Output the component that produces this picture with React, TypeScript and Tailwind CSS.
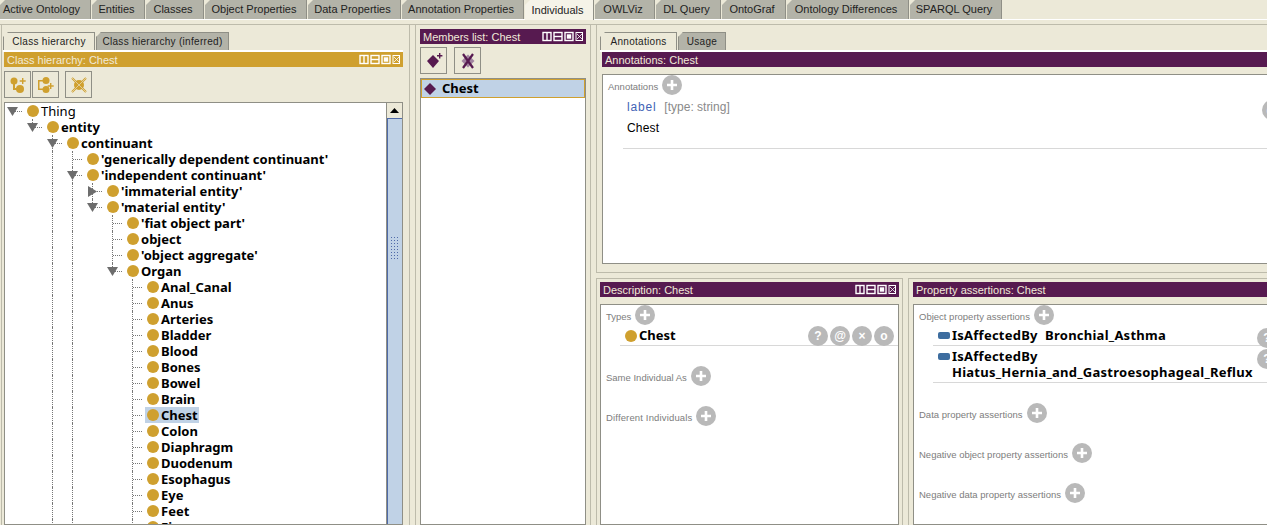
import React from 'react';

const topTabs = [
    { label: 'Active Ontology', width: 91 },
    { label: 'Entities', width: 53 },
    { label: 'Classes', width: 58 },
    { label: 'Object Properties', width: 102 },
    { label: 'Data Properties', width: 93 },
    { label: 'Annotation Properties', width: 122 },
    { label: 'Individuals', width: 69, active: true },
    { label: 'OWLViz', width: 60 },
    { label: 'DL Query', width: 65 },
    { label: 'OntoGraf', width: 64 },
    { label: 'Ontology Differences', width: 122 },
    { label: 'SPARQL Query', width: 92 },
];

// level: indent, toggle: open/closed/none, guides: indents that carry a vertical dotted line
type Row = { label: string; level: number; toggle?: 'open' | 'closed'; last?: boolean; guides: number[]; plain?: boolean; selected?: boolean };

const organs = ['Anal_Canal', 'Anus', 'Arteries', 'Bladder', 'Blood', 'Bones', 'Bowel', 'Brain', 'Chest', 'Colon', 'Diaphragm', 'Duodenum', 'Esophagus', 'Eye', 'Feet', 'Fi'];

const rows: Row[] = [
    { label: 'Thing', level: 0, toggle: 'open', last: true, guides: [], plain: true },
    { label: 'entity', level: 1, toggle: 'open', last: true, guides: [] },
    { label: 'continuant', level: 2, toggle: 'open', guides: [] },
    { label: "'generically dependent continuant'", level: 3, guides: [2] },
    { label: "'independent continuant'", level: 3, toggle: 'open', guides: [2] },
    { label: "'immaterial entity'", level: 4, toggle: 'closed', guides: [2, 3] },
    { label: "'material entity'", level: 4, toggle: 'open', last: true, guides: [2, 3] },
    { label: "'fiat object part'", level: 5, guides: [2, 3] },
    { label: 'object', level: 5, guides: [2, 3] },
    { label: "'object aggregate'", level: 5, guides: [2, 3] },
    { label: 'Organ', level: 5, toggle: 'open', last: true, guides: [2, 3] },
    ...organs.map(o => ({ label: o, level: 6, guides: [2, 3], selected: o === 'Chest' })),
];

const ClassDot = ({ className = '' }: { className?: string }) => (
    <span className={`inline-block w-3 h-3 rounded-full bg-[#cfa02f] shrink-0 ${className}`} />
);

const ViewButtons = () => (
    <svg width="41" height="11" viewBox="0 0 41 11" className="shrink-0">
        <g fill="none" stroke="#fff" strokeWidth="1.4">
            <rect x="1" y="1.5" width="8" height="8" />
            <path d="M5 1.5v8" />
            <rect x="12" y="1.5" width="8" height="8" />
            <path d="M12 5.5h8" />
            <rect x="23" y="1.5" width="8" height="8" />
            <rect x="25.5" y="4" width="3" height="3" fill="#fff" />
            <rect x="34" y="1.5" width="6.5" height="8" strokeWidth="1" />
            <path d="M35 3l5 5M40 3l-5 5" strokeWidth="0.8" />
        </g>
    </svg>
);

const TitleBar = ({ title, color, buttons = true }: { title: string; color: string; buttons?: boolean }) => (
    <div className={`h-[15px] flex items-center justify-between pl-[3px] pr-[3px] shrink-0 text-[11px] text-[#f1ead8] ${color}`}>
        <span className="mt-[2px]">{title}</span>
        {buttons && <ViewButtons />}
    </div>
);

const SubTab = ({ label, width, active }: { label: string; width: number; active?: boolean }) => (
    <div
        className={`h-[18px] flex items-center justify-center text-[10px] tracking-[0.3px] text-[#222] border border-b-0 border-[#8f8f86] [clip-path:polygon(5px_0,100%_0,100%_100%,0_100%,0_5px)] ${active ? 'bg-[#ece9d8]' : 'bg-[#b3b3a8]'}`}
        style={{ width }}
    >
        {label}
    </div>
);

const ToolButton = ({ children, className = '' }: { children: React.ReactNode; className?: string }) => (
    <div className={`w-[27px] h-[27px] border border-[#8f8f86] flex items-center justify-center ${className}`}>{children}</div>
);

const PlusButton = () => (
    <span className="w-5 h-5 rounded-full bg-[#b9b9b9] inline-flex items-center justify-center shrink-0">
        <svg width="12" height="12" viewBox="0 0 12 12"><path d="M6 1v10M1 6h10" stroke="#fff" strokeWidth="2.6" /></svg>
    </span>
);

const RoundButton = ({ children }: { children: React.ReactNode }) => (
    <span className="w-5 h-5 rounded-full bg-[#b9b9b9] inline-flex items-center justify-center shrink-0 text-white text-[12px] font-bold leading-none">{children}</span>
);

const SectionLabel = ({ label, className = '' }: { label: string; className?: string }) => (
    <div className={`flex items-center text-[9.5px] text-[#7d7d7d] ${className}`}>
        <span className="mr-[4px] mt-[5px]">{label}</span>
        <PlusButton />
    </div>
);

const Triangle = ({ toggle }: { toggle: 'open' | 'closed' }) => (
    <svg width="11" height="11" viewBox="0 0 11 11" className="relative shrink-0">
        {toggle === 'open' ? <path d="M0 1h11L5.5 10z" fill="#6d6d6d" /> : <path d="M1 0v11l9-5.5z" fill="#6d6d6d" />}
    </svg>
);

const TreeRow = ({ row }: { row: Row }) => (
    <div className="flex h-4 items-center -ml-[3px] shrink-0">
        {Array.from({ length: row.level }).map((_, i) => (
            <div key={i} className="w-5 h-4 shrink-0">
                {row.guides.includes(i) && <div className="h-4 w-[11px] border-r border-dotted border-[#777]" />}
            </div>
        ))}
        <div className="w-[20px] h-4 shrink-0 flex items-center justify-center relative">
            <div className="absolute left-[11px] right-0 top-[8px] border-t border-dotted border-[#777]" />
            {row.level > 0 && (
                <div className={`absolute left-[10px] top-0 border-l border-dotted border-[#777] ${row.last ? 'h-2' : 'h-4'}`} />
            )}
            {row.toggle && <Triangle toggle={row.toggle} />}
        </div>
        <div className={`flex items-center h-4 ${row.selected ? 'bg-[#c0d2e6] ml-[3px]' : ''}`}>
            <ClassDot className={row.selected ? 'ml-[2px]' : 'ml-[5px]'} />
            <span className={`ml-[2px] pr-[1px] text-[13px] leading-4 text-black whitespace-nowrap ${row.plain ? '' : 'font-bold'}`}>{row.label}</span>
        </div>
    </div>
);

const Scrollbar = () => (
    <div className="w-[16px] shrink-0 border-l border-[#8f8f86] flex flex-col">
        <div className="h-4 bg-[#ece9d8] border-b border-[#4f6aa8] flex items-center justify-center">
            <svg width="9" height="5" viewBox="0 0 9 5"><path d="M0 5h9L4.5 0z" fill="#000" /></svg>
        </div>
        <div className="flex-1 bg-[#c0d2e6] border-l border-[#4f6aa8] flex flex-col items-center pt-[117px]">
            <div className="w-[10px] h-[24px] bg-[radial-gradient(#4f6aa8_1px,transparent_1px)] bg-[length:3px_3px]" />
        </div>
    </div>
);

const AssertionRow = ({ lines }: { lines: string[] }) => (
    <div className="ml-[14px] border-b border-[#d8d8d8] pl-[5px] py-[2px] flex relative">
        <span className="w-[12px] h-[7px] rounded-[2px] bg-[#3d6d9f] mt-[5px] mr-[2px] shrink-0" />
        <div className="font-bold text-[13px] tracking-[0.25px] leading-[16px] text-black whitespace-pre overflow-hidden w-[302px] [font-family:'Noto_Sans',sans-serif]">
            {lines.map(l => <div key={l}>{l}</div>)}
        </div>
        <span className="absolute left-[324px] top-0"><RoundButton>?</RoundButton></span>
    </div>
);

export default function App() {
    return (
        <div className="w-[1267px] h-[525px] overflow-hidden bg-[#ece9d8] flex flex-col [font-family:'Liberation_Sans',sans-serif]">
            {/* Main tab strip */}
            <div className="h-[19px] flex gap-[1px] shrink-0 relative">
                {topTabs.map((t, i) => (
                    <div
                        key={t.label}
                        className={`relative shrink-0 flex items-center justify-center text-[11px] text-[#222] border-r border-[#8f8f86] [clip-path:polygon(5px_0,100%_0,100%_100%,0_100%,0_5px)] ${i === 0 ? 'pr-[7px]' : 'pr-[3px]'} ${t.active ? 'bg-[#f5f3e8] h-[20px] z-10' : 'bg-[#b3b3a8] h-[19px]'}`}
                        style={{ width: t.width }}
                    >
                        {t.label}
                    </div>
                ))}
            </div>
            <div className="h-px bg-white shrink-0" />
            <div className="h-px mt-[4px] bg-[#bdbbab] shrink-0" />

            <div className="flex-1 flex min-h-0 pl-[1px]">
                {/* Class hierarchy */}
                <div className="w-[409px] shrink-0 border-l border-r border-[#bdbbab] flex flex-col pt-[7px] pl-[1px] pr-[6px]">
                    <div className="flex gap-[1px] shrink-0">
                        <SubTab label="Class hierarchy" width={92} active />
                        <SubTab label="Class hierarchy (inferred)" width={133} />
                    </div>
                    <div className="h-[2px] bg-white shrink-0" />
                    <div className="pl-[1px] flex flex-col flex-1 min-h-0">
                        <TitleBar title="Class hierarchy: Chest" color="bg-[#cfa02f]" />
                        <div className="flex mt-[4px] mb-[4px] shrink-0">
                            <ToolButton>
                                <svg width="18" height="18" viewBox="0 0 18 18"><g fill="#cfa02f"><circle cx="5" cy="5" r="3.5" /><circle cx="11" cy="13" r="4" /><path d="M4 8h2v4h3v2H4zM13 2h1.4v2.3h2.3v1.4h-2.3V8H13V5.7h-2.3V4.3H13z" /></g></svg>
                            </ToolButton>
                            <ToolButton className="ml-[1px]">
                                <svg width="18" height="18" viewBox="0 0 18 18"><g fill="#cfa02f"><circle cx="9" cy="4.5" r="3.5" /><circle cx="9" cy="13.5" r="3.5" /><path d="M1 4h5v1.5H2.5v7H6V14H1zM13 7h1.4v2.3h2.3v1.4h-2.3V13H13v-2.3h-2.3V9.3H13z" /></g></svg>
                            </ToolButton>
                            <ToolButton className="ml-[6px]">
                                <svg width="18" height="18" viewBox="0 0 18 18"><circle cx="9" cy="9" r="5" fill="#cfa02f" /><path d="M2 2l14 14M16 2L2 16" stroke="#cfa02f" strokeWidth="2" /><path d="M2 2l14 14M16 2L2 16" stroke="#ece9d8" strokeWidth="0.6" /></svg>
                            </ToolButton>
                        </div>
                        <div className="flex-1 min-h-0 border border-[#8f8f86] flex bg-white">
                            <div className="flex-1 flex flex-col overflow-hidden [font-family:'Noto_Sans',sans-serif]">
                                {rows.map(r => <TreeRow key={r.label} row={r} />)}
                            </div>
                            <Scrollbar />
                        </div>
                    </div>
                </div>

                {/* Members list */}
                <div className="w-[176px] ml-[5px] shrink-0 border-l border-r border-[#bdbbab] flex flex-col pt-[4px] pl-[4px] pr-[4px]">
                    <TitleBar title="Members list: Chest" color="bg-[#571a50]" />
                    <div className="flex gap-[7px] mt-[3px] mb-[4px] shrink-0">
                        <ToolButton>
                            <svg width="18" height="18" viewBox="0 0 18 18"><path d="M8 3l6 6-6 7-6-7z" fill="#571a50" /><path d="M14 1h1.4v2h2v1.4h-2v2H14v-2h-2V3h2z" fill="#571a50" /></svg>
                        </ToolButton>
                        <ToolButton>
                            <svg width="18" height="18" viewBox="0 0 18 18"><path d="M9 2.5l6.5 6.5-6.5 6.5L2.5 9z" fill="#a283a0" /><path d="M4 2l10 14M14 2L4 16" stroke="#571a50" strokeWidth="2.2" /></svg>
                        </ToolButton>
                    </div>
                    <div className="flex-1 border border-[#8f8f86] bg-white">
                        <div className="h-[19px] bg-[#c0d2e6] border border-[#cfa02f] flex items-center pl-[2px]">
                            <svg width="12" height="12" viewBox="0 0 12 12"><path d="M6 0l6 6-6 6-6-6z" fill="#571a50" /></svg>
                            <span className="ml-[6px] text-[13px] font-bold text-black [font-family:'Noto_Sans',sans-serif]">Chest</span>
                        </div>
                    </div>
                </div>

                {/* Individual details */}
                <div className="flex-1 min-w-0 ml-[5px] flex flex-col">
                    <div className="h-[248px] shrink-0 border-l border-b border-[#bdbbab] flex flex-col pt-[7px] pl-[3px]">
                        <div className="flex gap-[1px] shrink-0">
                            <SubTab label="Annotations" width={77} active />
                            <SubTab label="Usage" width={48} />
                        </div>
                        <div className="h-[2px] bg-white shrink-0" />
                        <div className="pl-[2px] flex flex-col flex-1 min-h-0 pb-[8px]">
                            <TitleBar title="Annotations: Chest" color="bg-[#571a50]" buttons={false} />
                            <div className="flex-1 mt-[7px] border border-[#8f8f86] border-r-0 bg-white relative pl-[5px]">
                                <SectionLabel label="Annotations" />
                                <div className="pl-[19px] mt-[4px] text-[12px] leading-4 text-[#8a8a8a] flex">
                                    <span className="text-[#3f63b5] tracking-[0.8px]">label</span>
                                    <span className="ml-[8px]">[type: string]</span>
                                </div>
                                <div className="pl-[19px] mt-[5px] text-[12px] tracking-[0.2px] leading-4 text-black">Chest</div>
                                <div className="ml-[15px] mt-[12px] border-t border-[#d8d8d8]" />
                                <span className="absolute left-[659px] top-[22px]"><RoundButton>@</RoundButton></span>
                            </div>
                        </div>
                    </div>

                    <div className="flex flex-1 min-h-0 mt-[5px]">
                        <div className="w-[307px] shrink-0 border-l border-r border-t border-[#bdbbab] flex flex-col pt-[3px] pl-[3px] pr-[3px]">
                            <TitleBar title="Description: Chest" color="bg-[#571a50]" />
                            <div className="flex-1 mt-[7px] border border-[#8f8f86] bg-white pl-[5px]">
                                <SectionLabel label="Types" className="h-[20px]" />
                                <div className="relative h-[21px] ml-[14px] pt-[2px] border-b border-[#d8d8d8] flex items-center">
                                    <ClassDot className="ml-[5px]" />
                                    <span className="ml-[2px] text-[13px] font-bold text-black [font-family:'Noto_Sans',sans-serif]">Chest</span>
                                    <div className="absolute left-[188px] top-[1px] flex gap-[2px]">
                                        <RoundButton>?</RoundButton>
                                        <RoundButton>@</RoundButton>
                                        <RoundButton>×</RoundButton>
                                        <RoundButton>o</RoundButton>
                                    </div>
                                </div>
                                <SectionLabel label="Same Individual As" className="mt-[20px]" />
                                <SectionLabel label="Different Individuals" className="mt-[20px] tracking-[0.15px]" />
                            </div>
                        </div>
                        <div className="flex-1 min-w-0 ml-[5px] border-l border-t border-[#bdbbab] flex flex-col pt-[3px] pl-[4px]">
                            <TitleBar title="Property assertions: Chest" color="bg-[#571a50]" buttons={false} />
                            <div className="flex-1 mt-[7px] border border-[#8f8f86] border-r-0 bg-white pl-[5px]">
                                <SectionLabel label="Object property assertions" className="h-[20px]" />
                                <AssertionRow lines={['IsAffectedBy  Bronchial_Asthma']} />
                                <AssertionRow lines={['IsAffectedBy', 'Hiatus_Hernia_and_Gastroesophageal_Reflux']} />
                                <SectionLabel label="Data property assertions" className="mt-[20px]" />
                                <SectionLabel label="Negative object property assertions" className="mt-[20px]" />
                                <SectionLabel label="Negative data property assertions" className="mt-[20px]" />
                            </div>
                        </div>
                    </div>
                </div>
            </div>
        </div>
    );
}
